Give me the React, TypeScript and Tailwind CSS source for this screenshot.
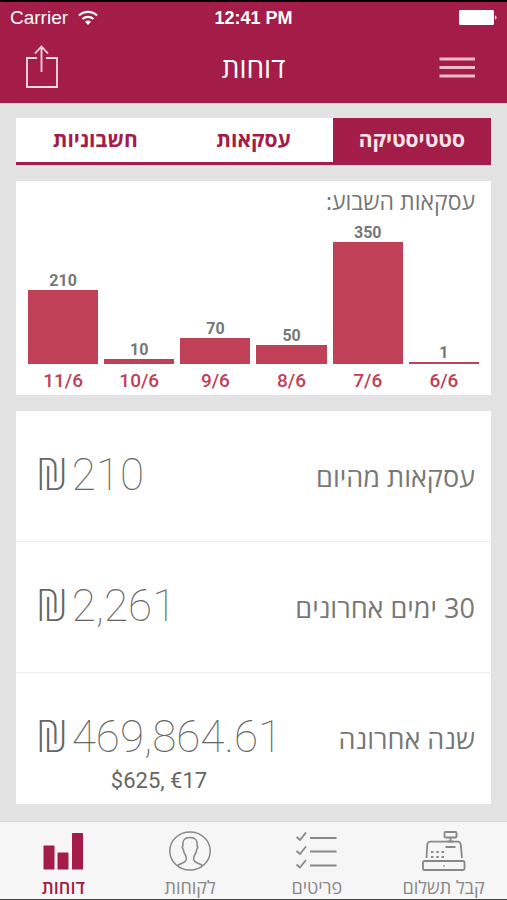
import React, { useState } from "react";

const tabs = ["סטטיסטיקה", "עסקאות", "חשבוניות"];

const days = [
  { date: "6/6", value: 1, height: 2 },
  { date: "7/6", value: 350, height: 122 },
  { date: "8/6", value: 50, height: 19 },
  { date: "9/6", value: 70, height: 26 },
  { date: "10/6", value: 10, height: 5 },
  { date: "11/6", value: 210, height: 74 },
];

const totals = [
  { label: "עסקאות מהיום", amount: "210" },
  { label: "30 ימים אחרונים", amount: "2,261" },
  { label: "שנה אחרונה", amount: "469,864.61", other: "$625, €17" },
];

const RegisterIcon = () => (
  <svg className="w-11 h-10" viewBox="0 0 44 40" fill="none" stroke="currentColor" strokeWidth="1.8">
    <rect x="22.500" y="1" width="12" height="5.500" rx="1" />
    <path d="M28.500 6.500v4M25.500 10.500h6" />
    <path d="M4.500 27l.7-13a3.300 3.300 0 0 1 3.300-3.300h27a3.300 3.300 0 0 1 3.300 3.300L40 27M23.500 16h10" />
    <rect x="1" y="30" width="41.500" height="9" rx="1.500" />
    <path d="M9 21h13M9 26h13" strokeDasharray="2.400 2.900" strokeWidth="2.200" />
    <circle cx="22" cy="34.800" r="0.900" fill="currentColor" stroke="none" />
  </svg>
);

const ListIcon = () => (
  <svg className="w-11 h-10" viewBox="0 0 44 40" fill="none" stroke="currentColor" strokeWidth="1.800">
    <path d="M1.500 6l3.500 3 6-7.500M1.500 20l3.500 3 6-7.500M1.500 33.500l3.500 3 6-7.500" />
    <path d="M15 7h26.500M15 20.500h26.500M15 34.500h26.500" />
  </svg>
);

const PersonIcon = () => (
  <svg className="w-11 h-10" viewBox="0 0 44 40" fill="none" stroke="currentColor" strokeWidth="1.500">
    <ellipse cx="22" cy="20" rx="20.200" ry="19" />
    <path d="M9.500 34.500c3.500-2.300 6.500-2.300 8.300-4.800 1.500-2.500.3-4.700-1.300-7.200-.8-1.500-1-2.800-1.300-4.300-.9-.8-.9-2.700-.3-3.700C14.300 9.500 16.500 6.500 22 6.500s7.700 3 7.100 8c.6 1 .6 2.900-.3 3.700-.3 1.500-.5 2.800-1.300 4.300-1.600 2.500-2.800 4.700-1.300 7.200 1.800 2.500 4.800 2.500 8.300 4.800" />
  </svg>
);

const ReportsIcon = () => (
  <svg className="w-11 h-10" viewBox="0 0 44 40" fill="currentColor">
    <rect x="2.500" y="14.500" width="11" height="24" rx="0.500" />
    <rect x="16.500" y="21.500" width="11" height="17" rx="0.500" />
    <rect x="31" y="2" width="11" height="36.500" rx="0.500" />
  </svg>
);

const navItems = [
  { label: "קבל תשלום", icon: <RegisterIcon /> },
  { label: "פריטים", icon: <ListIcon /> },
  { label: "לקוחות", icon: <PersonIcon /> },
  { label: "דוחות", icon: <ReportsIcon />, active: true },
];

const StatusBar = () => (
  <div dir="ltr" className="grid grid-cols-3 items-center h-8 px-2.5 font-['Liberation_Sans',sans-serif] text-lg">
    <div className="flex items-center gap-2.5">
      <span className="text-[19px]">Carrier</span>
      <svg className="w-5 h-4" viewBox="0 0 20 16" fill="none" stroke="currentColor" strokeWidth="2.200">
        <path d="M1 5.500a13 13 0 0 1 18 0M4.500 9a8 8 0 0 1 11 0" />
        <path d="M10 15l-3-3.200a4.500 4.500 0 0 1 6 0z" fill="currentColor" stroke="none" />
      </svg>
    </div>
    <span className="text-center font-bold text-lg">12:41 PM</span>
    <svg className="w-10 h-4 justify-self-end" viewBox="0 0 40 16" fill="currentColor">
      <rect x="2" y="0" width="35" height="15" rx="1.500" />
      <path d="M38 5.500c2 .5 2 3.500 0 4z" />
    </svg>
  </div>
);

const App = () => {
  const [activeTab, setActiveTab] = useState(tabs[0]);

  return (
    <div
      dir="rtl"
      className="flex flex-col min-h-screen bg-[#e3e3e3] text-[#777] font-['Open_Sans','Noto_Sans',sans-serif] border-b border-[#444]"
    >
      <header className="bg-[#a31d48] text-white border-t-2 border-black">
        <StatusBar />
        <div className="grid grid-cols-3 items-center h-[69px] px-6 pb-1">
          <button aria-label="תפריט" className="px-2 justify-self-start">
            <svg className="w-9 h-6" viewBox="0 0 36 24" stroke="#f0bccb" strokeWidth="3">
              <path d="M0.500 4H36M0.500 12.500H36M0.500 21H36" />
            </svg>
          </button>
          <h1 className="text-center text-[28px] leading-8">דוחות</h1>
          <button aria-label="שיתוף" className="justify-self-end">
            <svg className="w-9 h-11" viewBox="0 0 36 44" fill="none" stroke="#fbdde6" strokeWidth="1.800">
              <path d="M13 13H3v29h30V13H22M17.500 27V1.500M11 8.500l6.500-7 6.500 7" />
            </svg>
          </button>
        </div>
      </header>

      <main className="flex-1 flex flex-col gap-4 px-4 pt-[15px] pb-4">
        <div className="grid grid-cols-3 bg-white">
          {tabs.map((tab) => (
            <button
              key={tab}
              onClick={() => setActiveTab(tab)}
              className={`h-[47px] border-b-3 border-[#a31d48] text-[21px] font-bold ${
                tab === activeTab ? "bg-[#a31d48] text-[#fbe4eb]" : "text-[#a31d48]"
              }`}
            >
              {tab}
            </button>
          ))}
        </div>

        <section className="bg-white px-3 h-[214px] flex flex-col">
          <h2 className="px-1 pt-1 text-[23px] leading-8">עסקאות השבוע:</h2>
          <div className="flex-1 flex items-end gap-1.5">
            {days.map((day) => (
              <div key={day.date} className="flex-1 flex flex-col items-center">
                <span className="text-base leading-[18px] font-bold font-[Roboto,sans-serif]">{day.value}</span>
                <div className="w-full bg-[#c04058]" style={{ height: day.height }} />
                <span dir="ltr" className="pt-[5px] pb-0.5 text-[19px] leading-6 font-medium text-[#c04058] font-[Roboto,sans-serif]">
                  {day.date}
                </span>
              </div>
            ))}
          </div>
        </section>

        <section className="bg-white divide-y divide-[#eee]">
          {totals.map((total) => (
            <div key={total.label} className="flex items-start justify-between h-[131px] px-4">
              <h3 className="pt-[50px] text-[27px] leading-8">{total.label}</h3>
              <div dir="ltr" className="pt-[38px] pl-1 text-center text-[#666] font-[Roboto,sans-serif]">
                <p className="flex gap-1 text-[44px] leading-[52px] font-thin">
                  <span className="font-extralight font-['DejaVu_Sans','Open_Sans',sans-serif]">₪</span>
                  {total.amount}
                </p>
                {total.other && <p className="pt-0.5 text-[22px] leading-8">{total.other}</p>}
              </div>
            </div>
          ))}
        </section>
      </main>

      <nav className="grid grid-cols-4 h-[78px] pt-[9px] bg-[#f6f6f6] border-t border-[#d8d8d8]">
        {navItems.map((item) => (
          <a
            key={item.label}
            href="#"
            className={`flex flex-col items-center text-lg leading-6 ${
              item.active ? "text-[#a31d48] font-semibold" : "text-[#888]"
            }`}
          >
            {item.icon}
            <span className="pt-1">{item.label}</span>
          </a>
        ))}
      </nav>
    </div>
  );
};

export default App;
